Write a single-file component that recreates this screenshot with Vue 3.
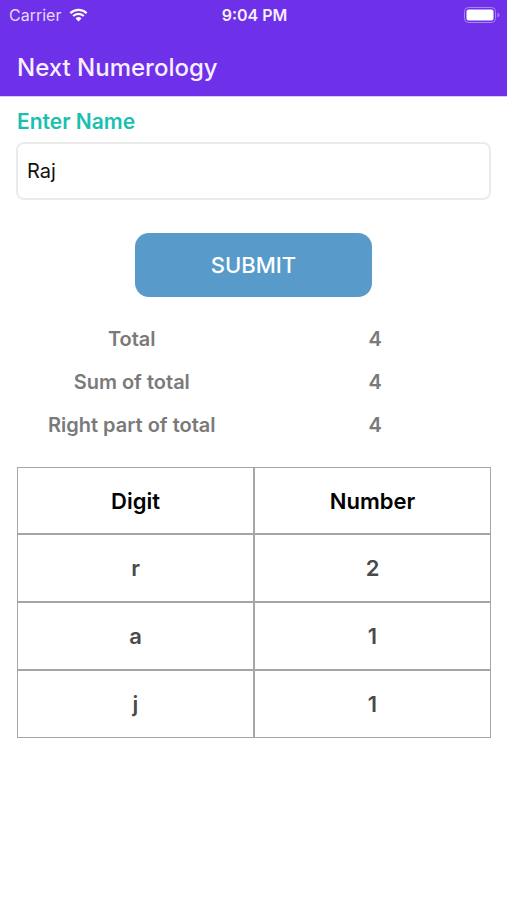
<script setup>
import { computed, ref } from 'vue'

const name = ref('Raj')
const submitted = ref('Raj')

const values = {}
const groups = ['aijqy', 'bkr', 'cgls', 'dmt', 'ehnx', 'uvw', 'oz', 'fp']
groups.forEach((letters, index) => {
  for (const letter of letters) values[letter] = index + 1
})

const digits = computed(() =>
  [...submitted.value.toLowerCase()]
    .filter((letter) => letter in values)
    .map((letter) => ({ letter, number: values[letter] }))
)
const total = computed(() => digits.value.reduce((sum, row) => sum + row.number, 0))
const totals = computed(() => [
  { label: 'Total', value: total.value },
  { label: 'Sum of total', value: total.value ? ((total.value - 1) % 9) + 1 : 0 },
  { label: 'Right part of total', value: total.value % 10 }
])

function submit() {
  submitted.value = name.value
}
</script>

<template>
  <div class="app">
    <header class="header">
      <div class="status">
        <div class="carrier">
          <span>Carrier</span>
          <svg class="wifi" viewBox="0 0 20 14" aria-hidden="true">
            <path d="M1.4 5.1a12.2 12.2 0 0 1 17.2 0" />
            <path d="M4.4 8.1a8 8 0 0 1 11.2 0" />
            <path class="dot" d="M10 13.8 6.9 10.7a4.4 4.4 0 0 1 6.2 0z" />
          </svg>
        </div>
        <span class="time">9:04 PM</span>
        <svg class="battery" viewBox="0 0 36 16" aria-hidden="true">
          <rect class="shell" x="0.5" y="0.5" width="31" height="15" rx="4" />
          <rect class="charge" x="2.5" y="2.5" width="27" height="11" rx="2" />
          <path class="tip" d="M33.5 5.5q2 .6 2 2.5t-2 2.5z" />
        </svg>
      </div>
      <h1 class="title">Next Numerology</h1>
    </header>

    <main>
      <form class="form" @submit.prevent="submit">
        <label class="label" for="name">Enter Name</label>
        <input id="name" v-model="name" class="field" type="text" autocomplete="off" />
        <button class="submit" type="submit">SUBMIT</button>
      </form>

      <dl class="totals">
        <div v-for="item in totals" :key="item.label" class="total">
          <dt>{{ item.label }}</dt>
          <dd>{{ item.value }}</dd>
        </div>
      </dl>

      <div class="results">
        <table>
          <thead>
            <tr>
              <th scope="col">Digit</th>
              <th scope="col">Number</th>
            </tr>
          </thead>
          <tbody>
            <tr v-for="(row, index) in digits" :key="index">
              <td>{{ row.letter }}</td>
              <td>{{ row.number }}</td>
            </tr>
          </tbody>
        </table>
      </div>
    </main>
  </div>
</template>

<style>
body {
  margin: 0;
  background: #fff;
}
</style>

<style scoped>
.app {
  font-family: Inter, "Liberation Sans", sans-serif;
  color: #000;
}

.header {
  background: #6e30e8;
  color: #f6efff;
  border-bottom: 1px solid #dcc8fa;
}

.status {
  display: grid;
  grid-template-columns: 1fr auto 1fr;
  align-items: center;
  height: 30px;
  padding: 0 7px 0 9px;
  font-size: 16px;
}

.carrier {
  display: flex;
  align-items: center;
  gap: 8px;
  color: #e6d9fc;
}

.wifi {
  width: 19px;
  height: 14px;
  fill: none;
  stroke: #fff;
  stroke-width: 2.4;
}

.dot {
  fill: #fff;
  stroke: none;
}

.time {
  font-weight: 600;
}

.battery {
  justify-self: end;
  width: 36px;
  height: 16px;
}

.shell {
  fill: none;
  stroke: #a986f3;
}

.charge {
  fill: #fff;
}

.tip {
  fill: #a986f3;
}

.title {
  margin: 0;
  padding: 21px 17px 12px;
  font-size: 24px;
  font-weight: 500;
  line-height: 33px;
}

.form {
  display: flex;
  flex-direction: column;
  padding: 11px 16px 0;
}

.label {
  font-size: 21px;
  font-weight: 600;
  line-height: 28px;
  color: #1bbfaf;
  padding-left: 1px;
}

.field {
  box-sizing: border-box;
  width: 100%;
  height: 58px;
  margin: 6px 0 0;
  padding: 0 9px;
  border: 2px solid #ebebeb;
  border-radius: 8px;
  background: #fff;
  font: inherit;
  font-size: 20px;
  color: #111;
}

.submit {
  align-self: center;
  width: 50%;
  height: 64px;
  margin: 33px 0 0;
  border: 0;
  border-radius: 14px;
  background: #589bcb;
  color: #fff;
  font: inherit;
  font-size: 22px;
  font-weight: 500;
}

.totals {
  display: flex;
  flex-direction: column;
  gap: 15px;
  margin: 0;
  padding: 28px 10px;
  font-size: 20px;
  font-weight: 600;
  line-height: 28px;
  color: #7a7a7a;
}

.total {
  display: grid;
  grid-template-columns: 1fr 1fr;
  text-align: center;
}

.total dd {
  margin: 0;
}

.results {
  padding: 0 16px 0 17px;
}

table {
  width: 100%;
  table-layout: fixed;
  border-collapse: separate;
  border-spacing: 0;
  font-size: 22px;
  font-weight: 600;
  text-align: center;
}

th,
td {
  box-sizing: border-box;
  padding: 0;
  border: 1px solid #a6a6a6;
}

th {
  height: 67px;
  font-weight: 600;
}

td {
  height: 68px;
  color: #4a4a4a;
}
</style>
